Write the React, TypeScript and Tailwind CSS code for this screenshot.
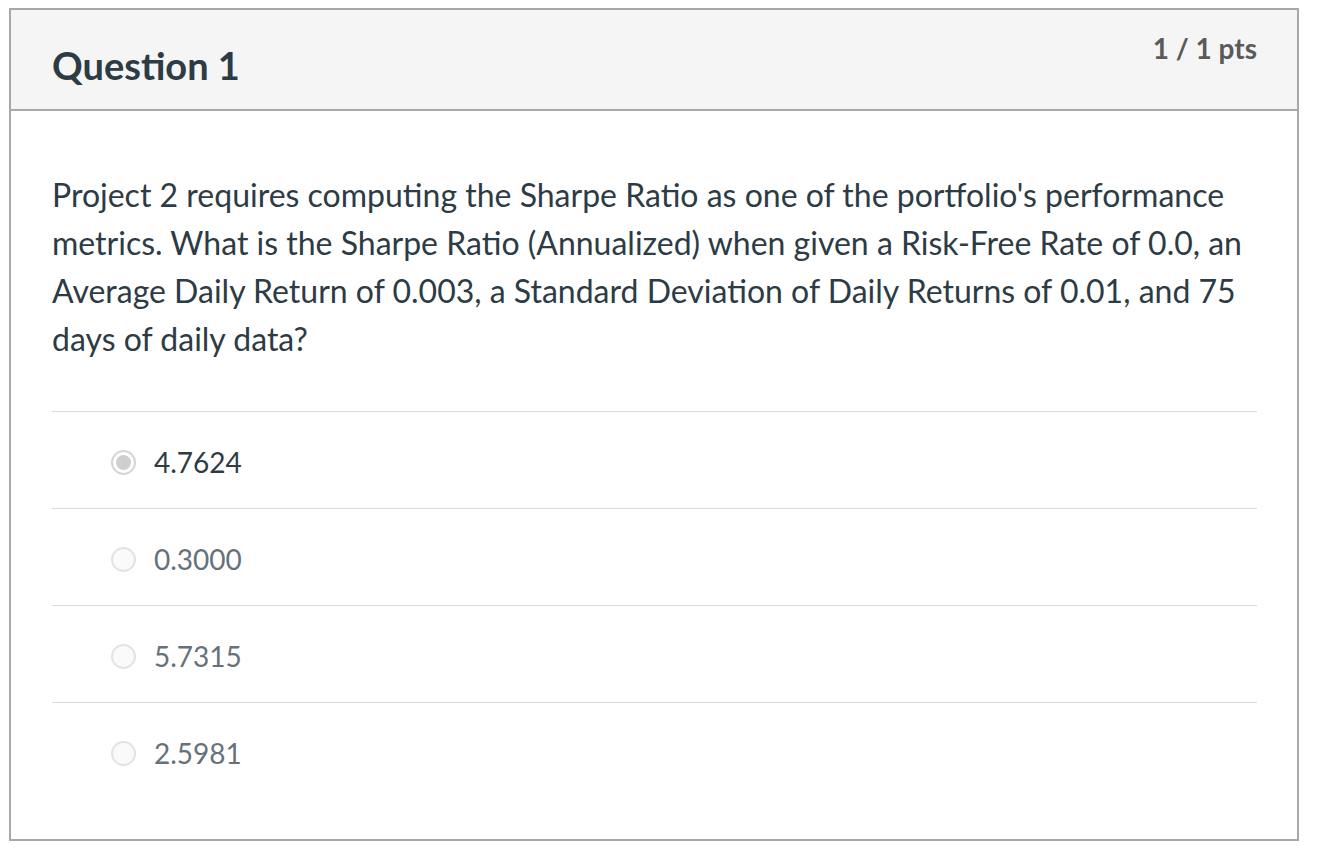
import React from 'react'

const answers = [
  { label: '4.7624', selected: true },
  { label: '0.3000', selected: false },
  { label: '5.7315', selected: false },
  { label: '2.5981', selected: false },
]

const Radio = ({ selected }: { selected: boolean }) =>
  selected ? (
    <span className="flex h-[25px] w-[25px] items-center justify-center rounded-full border-2 border-[#d5d5d5] bg-white">
      <span className="h-[15px] w-[15px] rounded-full bg-[#cfcfcf]" />
    </span>
  ) : (
    <span className="h-[25px] w-[25px] rounded-full border-2 border-[#e3e3e3] bg-[#fafafa]" />
  )

export default function App() {
  return (
    <div className="min-h-screen bg-white pl-[9px] pt-[8px] font-['Lato','Noto_Sans',sans-serif] text-[#2d3b45]">
      <div className="w-[1290px] border-2 border-[#a8a8a8]">
        <div className="flex h-[101px] justify-between border-b-2 border-[#a8a8a8] bg-[#f5f5f5] pl-[41px] pr-[40px]">
          <h2 className="mt-[33px] text-[38px] font-bold leading-[1.2] text-[#2d3b45]">Question 1</h2>
          <div className="mt-[22px] text-[28px] font-bold leading-[1.2] text-[#5a5a5a]">1 / 1 pts</div>
        </div>

        <div className="pl-[41px] pr-[40px] pt-[60px] pb-[40px]">
          <p className="text-[32px] leading-[48px]">
            Project 2 requires computing the Sharpe Ratio as one of the portfolio's performance metrics. What is the
            Sharpe Ratio (Annualized) when given a Risk-Free Rate of 0.0, an Average Daily Return of 0.003, a Standard
            Deviation of Daily Returns of 0.01, and 75 days of daily data?
          </p>

          <div className="mt-[48px]">
            {answers.map((a) => (
              <div key={a.label} className="flex h-[97px] items-center border-t border-[#dcdcdc] pl-[59px] pt-[5px]">
                <Radio selected={a.selected} />
                <span
                  className={`ml-[18px] text-[28px] leading-[1.2] ${a.selected ? 'text-[#2d3b45]' : 'text-[#66727b]'}`}
                >
                  {a.label}
                </span>
              </div>
            ))}
          </div>
        </div>
      </div>
    </div>
  )
}
